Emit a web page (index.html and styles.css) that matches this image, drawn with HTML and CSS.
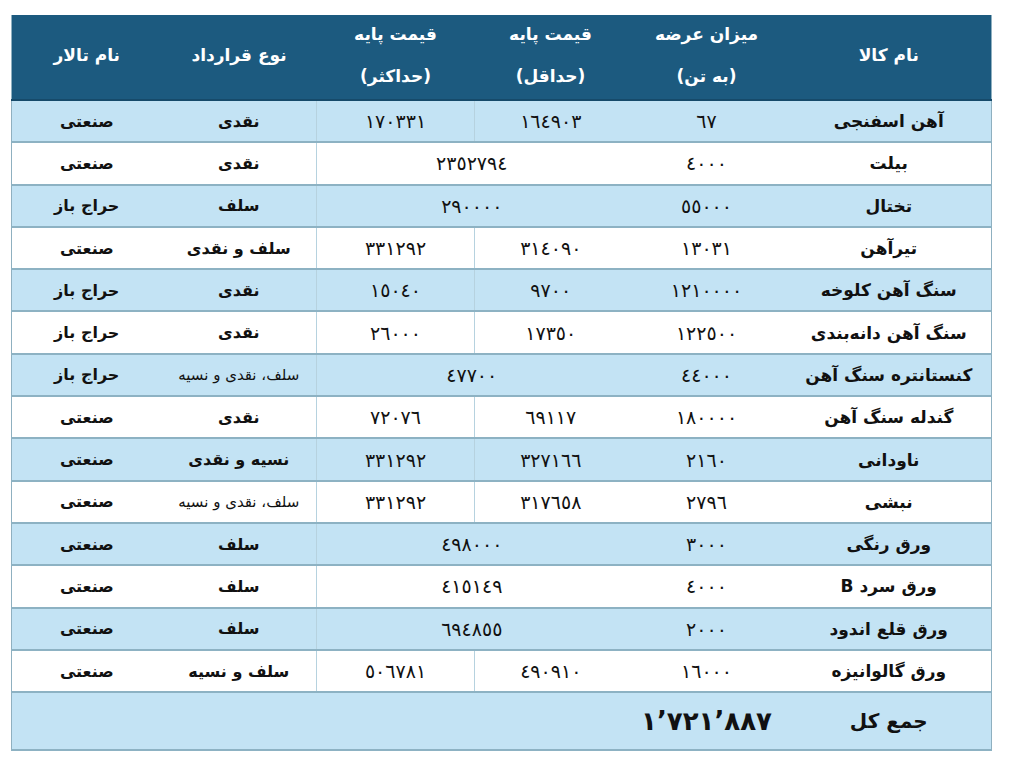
FILE: index.html
```html
<!DOCTYPE html>
<html lang="fa" dir="rtl">
<head>
<meta charset="utf-8">
<title>جدول عرضه</title>
<link rel="stylesheet" href="styles.css">
</head>
<body>
<div class="page">
<table class="grid">
  <colgroup>
    <col class="c-name"><col class="c-qty"><col class="c-min"><col class="c-max"><col class="c-type"><col class="c-hall">
  </colgroup>
  <thead>
    <tr>
      <th>نام کالا</th>
      <th><span class="l1">میزان عرضه</span><span class="l2">(به تن)</span></th>
      <th><span class="l1">قیمت پایه</span><span class="l2">(حداقل)</span></th>
      <th><span class="l1">قیمت پایه</span><span class="l2">(حداکثر)</span></th>
      <th>نوع قرارداد</th>
      <th>نام تالار</th>
    </tr>
  </thead>
  <tbody>
    <tr class="alt"><td class="name">آهن اسفنجی</td><td class="num">٦٧</td><td class="num">١٦٤٩٠٣</td><td class="num max">١٧٠٣٣١</td><td class="txt">نقدی</td><td class="txt">صنعتی</td></tr>
    <tr><td class="name">بیلت</td><td class="num">٤٠٠٠</td><td class="num merged" colspan="2">٢٣٥٢٧٩٤</td><td class="txt">نقدی</td><td class="txt">صنعتی</td></tr>
    <tr class="alt"><td class="name">تختال</td><td class="num">٥٥٠٠٠</td><td class="num merged" colspan="2">٢٩٠٠٠٠</td><td class="txt">سلف</td><td class="txt">حراج باز</td></tr>
    <tr><td class="name">تیرآهن</td><td class="num">١٣٠٣١</td><td class="num">٣١٤٠٩٠</td><td class="num max">٣٣١٢٩٢</td><td class="txt">سلف و نقدی</td><td class="txt">صنعتی</td></tr>
    <tr class="alt"><td class="name">سنگ آهن کلوخه</td><td class="num">١٢١٠٠٠٠</td><td class="num">٩٧٠٠</td><td class="num max">١٥٠٤٠</td><td class="txt">نقدی</td><td class="txt">حراج باز</td></tr>
    <tr><td class="name">سنگ آهن دانه‌بندی</td><td class="num">١٢٢٥٠٠</td><td class="num">١٧٣٥٠</td><td class="num max">٢٦٠٠٠</td><td class="txt">نقدی</td><td class="txt">حراج باز</td></tr>
    <tr class="alt"><td class="name">کنستانتره سنگ آهن</td><td class="num">٤٤٠٠٠</td><td class="num merged" colspan="2">٤٧٧٠٠</td><td class="txt small">سلف، نقدی و نسیه</td><td class="txt">حراج باز</td></tr>
    <tr><td class="name">گندله سنگ آهن</td><td class="num">١٨٠٠٠٠</td><td class="num">٦٩١١٧</td><td class="num max">٧٢٠٧٦</td><td class="txt">نقدی</td><td class="txt">صنعتی</td></tr>
    <tr class="alt"><td class="name">ناودانی</td><td class="num">٢١٦٠</td><td class="num">٣٢٧١٦٦</td><td class="num max">٣٣١٢٩٢</td><td class="txt">نسیه و نقدی</td><td class="txt">صنعتی</td></tr>
    <tr><td class="name">نبشی</td><td class="num">٢٧٩٦</td><td class="num">٣١٧٦٥٨</td><td class="num max">٣٣١٢٩٢</td><td class="txt small">سلف، نقدی و نسیه</td><td class="txt">صنعتی</td></tr>
    <tr class="alt"><td class="name">ورق رنگی</td><td class="num">٣٠٠٠</td><td class="num merged" colspan="2">٤٩٨٠٠٠</td><td class="txt">سلف</td><td class="txt">صنعتی</td></tr>
    <tr><td class="name">ورق سرد B</td><td class="num">٤٠٠٠</td><td class="num merged" colspan="2">٤١٥١٤٩</td><td class="txt">سلف</td><td class="txt">صنعتی</td></tr>
    <tr class="alt"><td class="name">ورق قلع اندود</td><td class="num">٢٠٠٠</td><td class="num merged" colspan="2">٦٩٤٨٥٥</td><td class="txt">سلف</td><td class="txt">صنعتی</td></tr>
    <tr><td class="name">ورق گالوانیزه</td><td class="num">١٦٠٠٠</td><td class="num">٤٩٠٩١٠</td><td class="num max">٥٠٦٧٨١</td><td class="txt">سلف و نسیه</td><td class="txt">صنعتی</td></tr>
    <tr class="alt total"><td class="name">جمع کل</td><td class="sum"><span class="sumval">١’٧٢١’٨٨٧</span></td><td></td><td></td><td></td><td></td></tr>
  </tbody>
</table>
</div>
</body>
</html>
```
FILE: styles.css
```css
html, body {
  margin: 0;
  padding: 0;
  background: #ffffff;
}
.page {
  padding: 15px 0 0 11px;
  direction: ltr;
}
.grid {
  direction: rtl;
  width: 980px;
  border-collapse: collapse;
  table-layout: fixed;
  font-family: "DejaVu Sans", sans-serif;
  color: #111;
  border-left: 1px solid #8fb0c0;
  border-right: 1px solid #8fb0c0;
}
.c-name { width: 205px; }
.c-qty { width: 160px; }
.c-min { width: 152px; }
.c-max { width: 158px; }
.c-type { width: 155px; }
.c-hall { width: 150px; }

thead th {
  background: #1c5a7f;
  color: #ffffff;
  font-weight: bold;
  font-size: 17px;
  height: 80px;
  padding: 0 0 4px 0;
  text-align: center;
  vertical-align: middle;
  border-bottom: 2px solid #164a6a;
}
thead .l1, thead .l2 {
  display: block;
  line-height: 21px;
}
thead .l2 {
  margin-top: 21px;
}

tbody tr {
  height: 42.3px;
  background: #ffffff;
}
tbody tr.alt {
  background: #c3e3f4;
}
tbody td {
  padding: 0;
  text-align: center;
  vertical-align: middle;
  border-bottom: 2px solid #8db2c3;
  font-size: 17px;
  white-space: nowrap;
}
td.name {
  font-weight: bold;
  font-size: 17px;
}
td.txt {
  font-weight: bold;
  font-size: 16px;
}
td.txt.small {
  font-weight: normal;
  font-size: 15px;
}
td.num {
  font-weight: normal;
  font-size: 19px;
  letter-spacing: 2.5px;
}
td.max {
  border-left: 1px solid #b6d2df;
  border-right: 1px solid #b6d2df;
}
td.merged {
  border-left: 1px solid #b6d2df;
}
tbody tr.total {
  height: 58px;
}
td.sum {
  text-align: center;
}
.sumval {
  direction: ltr;
  unicode-bidi: bidi-override;
  font-weight: bold;
  font-size: 26px;
}
tr.total td.name {
  font-size: 20px;
}
```
